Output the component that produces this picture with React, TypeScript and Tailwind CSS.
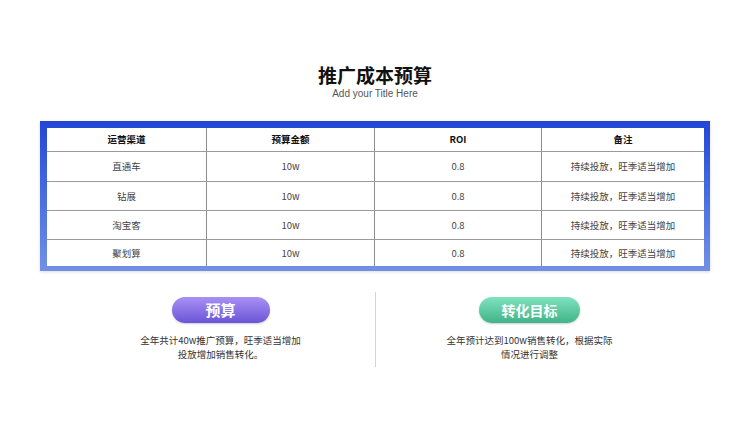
const rows = [
  { channel: "直通车", budget: "10w", roi: "0.8", note: "持续投放，旺季适当增加", h: "h-[30px]" },
  { channel: "钻展", budget: "10w", roi: "0.8", note: "持续投放，旺季适当增加", h: "h-[29px]" },
  { channel: "淘宝客", budget: "10w", roi: "0.8", note: "持续投放，旺季适当增加", h: "h-[29px]" },
  { channel: "聚划算", budget: "10w", roi: "0.8", note: "持续投放，旺季适当增加", h: "h-[26px]" },
];

const cjk = "font-['Noto_Sans_CJK_SC','Noto_Sans',sans-serif]";

function Cell({ children, last, bold }: { children: React.ReactNode; last?: boolean; bold?: boolean }) {
  return (
    <div
      className={`flex items-center justify-center text-[9.5px] ${
        bold ? "font-bold text-[#111]" : "text-[#444]"
      } ${last ? "" : "border-r border-[#8d8d8d]"}`}
    >
      {children}
    </div>
  );
}

export default function App() {
  return (
    <div className={`w-[750px] h-[422px] bg-white flex flex-col items-center pt-[62px] ${cjk}`}>
      <h1 className="text-[19px] leading-[26px] font-bold text-[#111]">推广成本预算</h1>
      <p className="text-[10px] leading-[12px] text-[#555] font-['Liberation_Sans',sans-serif]">
        Add your Title Here
      </p>

      <div className="mt-[21px] w-[670px] pt-[7px] pl-[7px] pr-[6px] pb-[5px] bg-gradient-to-b from-[#2345d6] to-[#7290e6] shadow-[0_1px_3px_rgba(0,0,0,0.15)]">
        <div className="bg-white">
          <div className="grid grid-cols-[160px_168px_167px_1fr] h-[24px] border-b border-[#9a9a9a]">
            <Cell bold>运营渠道</Cell>
            <Cell bold>预算金额</Cell>
            <Cell bold>ROI</Cell>
            <Cell bold last>备注</Cell>
          </div>
          {rows.map((r, i) => (
            <div
              key={r.channel}
              className={`grid grid-cols-[160px_168px_167px_1fr] ${r.h} ${
                i < rows.length - 1 ? "border-b border-[#9a9a9a]" : ""
              }`}
            >
              <Cell>{r.channel}</Cell>
              <Cell>{r.budget}</Cell>
              <Cell>{r.roi}</Cell>
              <Cell last>{r.note}</Cell>
            </div>
          ))}
        </div>
      </div>

      <div className="mt-[21px] flex">
        <div className="w-[308px] flex flex-col items-center pt-[5px]">
          <div className="w-[98px] h-[26px] rounded-full bg-gradient-to-b from-[#a990f4] to-[#6c54d6] flex items-center justify-center text-white font-bold text-[15px] shadow-[0_1px_2px_rgba(0,0,0,0.2)]">
            预算
          </div>
          <p className="mt-[10px] text-[9.5px] leading-[14px] text-[#333] text-center">
            全年共计40w推广预算，旺季适当增加
            <br />
            投放增加销售转化。
          </p>
        </div>
        <div className="w-px h-[75px] bg-[#d4d4d4]" />
        <div className="w-[308px] flex flex-col items-center pt-[5px]">
          <div className="w-[101px] h-[26px] rounded-full bg-gradient-to-b from-[#7fe2c0] to-[#3fb488] flex items-center justify-center text-white font-bold text-[14px] shadow-[0_1px_2px_rgba(0,0,0,0.2)]">
            转化目标
          </div>
          <p className="mt-[10px] text-[9.5px] leading-[14px] text-[#333] text-center">
            全年预计达到100w销售转化，根据实际
            <br />
            情况进行调整
          </p>
        </div>
      </div>
    </div>
  );
}
